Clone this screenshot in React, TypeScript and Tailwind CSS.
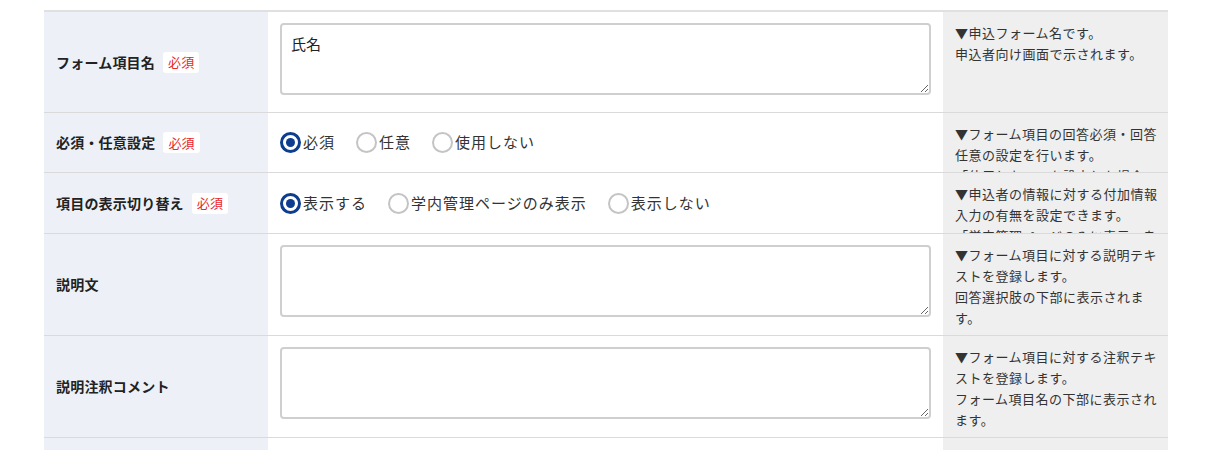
import type { ReactNode } from 'react';

type Option = { label: string; checked?: boolean };

function RequiredBadge() {
  return (
    <span className="ml-2 inline-flex h-[21px] items-center rounded-[3px] bg-white px-[5px] text-[13px] font-normal text-[#e8262b]">
      必須
    </span>
  );
}

function Radio({ label, checked }: Option) {
  return (
    <label className="inline-flex items-center gap-[2px] text-[15px] tracking-[1px] text-[#333]">
      {checked ? (
        <span className="flex h-[21px] w-[21px] items-center justify-center rounded-full border-[3px] border-[#0c3d8f] bg-white">
          <span className="h-[9px] w-[9px] rounded-full bg-[#0c3d8f]" />
        </span>
      ) : (
        <span className="h-[21px] w-[21px] rounded-full border-2 border-[#c4c4c4] bg-white" />
      )}
      {label}
    </label>
  );
}

function RadioGroup({ options }: { options: Option[] }) {
  return (
    <div className="flex items-center gap-[21px]">
      {options.map((o) => (
        <Radio key={o.label} {...o} />
      ))}
    </div>
  );
}

function TextBox({ value }: { value?: string }) {
  return (
    <textarea
      defaultValue={value}
      className="block h-[72px] w-full rounded-[4px] border-2 border-[#cfcfcf] bg-white px-[9px] py-[8px] text-[15px] text-[#222] outline-none"
    />
  );
}

function Row({
  label,
  required,
  height,
  align,
  children,
  help,
}: {
  label: string;
  required?: boolean;
  height: string;
  align: string;
  children?: ReactNode;
  help?: ReactNode;
}) {
  return (
    <div className={`flex border-b border-[#dadada] ${height}`}>
      <div className="flex w-[224px] shrink-0 items-center bg-[#edf1f7] pl-3 text-[14px] font-bold tracking-[0.2px] text-[#222]">
        {label}
        {required && <RequiredBadge />}
      </div>
      <div className={`flex flex-1 bg-white px-3 ${align}`}>{children}</div>
      <div className="w-[225px] shrink-0 overflow-hidden bg-[#efefef] pl-3 pr-2 pt-[10px] text-[13px] leading-[21px] tracking-[0.5px] text-[#333]">
        {help}
      </div>
    </div>
  );
}

export default function App() {
  return (
    <div className="h-[450px] overflow-hidden bg-white font-['Noto_Sans_CJK_JP','Noto_Sans',sans-serif]">
      <div className="ml-[44px] mt-[10px] w-[1124px] border-t-2 border-[#e0e0e0]">
        <Row
          label="フォーム項目名"
          required
          height="h-[101px]"
          align="items-start pt-[11px]"
          help={
            <>
              <p>▼申込フォーム名です。</p>
              <p>申込者向け画面で示されます。</p>
            </>
          }
        >
          <TextBox value="氏名" />
        </Row>

        <Row
          label="必須・任意設定"
          required
          height="h-[60px]"
          align="items-center"
          help={
            <>
              <p>▼フォーム項目の回答必須・回答任意の設定を行います。</p>
              <p>「使用しない」を設定した場合は、申込者向け画面に表示されません。</p>
            </>
          }
        >
          <RadioGroup
            options={[
              { label: '必須', checked: true },
              { label: '任意' },
              { label: '使用しない' },
            ]}
          />
        </Row>

        <Row
          label="項目の表示切り替え"
          required
          height="h-[61px]"
          align="items-center"
          help={
            <>
              <p>▼申込者の情報に対する付加情報入力の有無を設定できます。</p>
              <p>「学内管理ページのみに表示」を選択した場合は、申込者向け画面に表示されません。</p>
            </>
          }
        >
          <RadioGroup
            options={[
              { label: '表示する', checked: true },
              { label: '学内管理ページのみ表示' },
              { label: '表示しない' },
            ]}
          />
        </Row>

        <Row
          label="説明文"
          height="h-[102px]"
          align="items-start pt-[11px]"
          help={
            <>
              <p>▼フォーム項目に対する説明テキストを登録します。</p>
              <p>回答選択肢の下部に表示されます。</p>
            </>
          }
        >
          <TextBox />
        </Row>

        <Row
          label="説明注釈コメント"
          height="h-[102px]"
          align="items-start pt-[11px]"
          help={
            <>
              <p>▼フォーム項目に対する注釈テキストを登録します。</p>
              <p>フォーム項目名の下部に表示されます。</p>
            </>
          }
        >
          <TextBox />
        </Row>

        <Row label="" height="h-[60px]" align="items-start" />
      </div>
    </div>
  );
}
